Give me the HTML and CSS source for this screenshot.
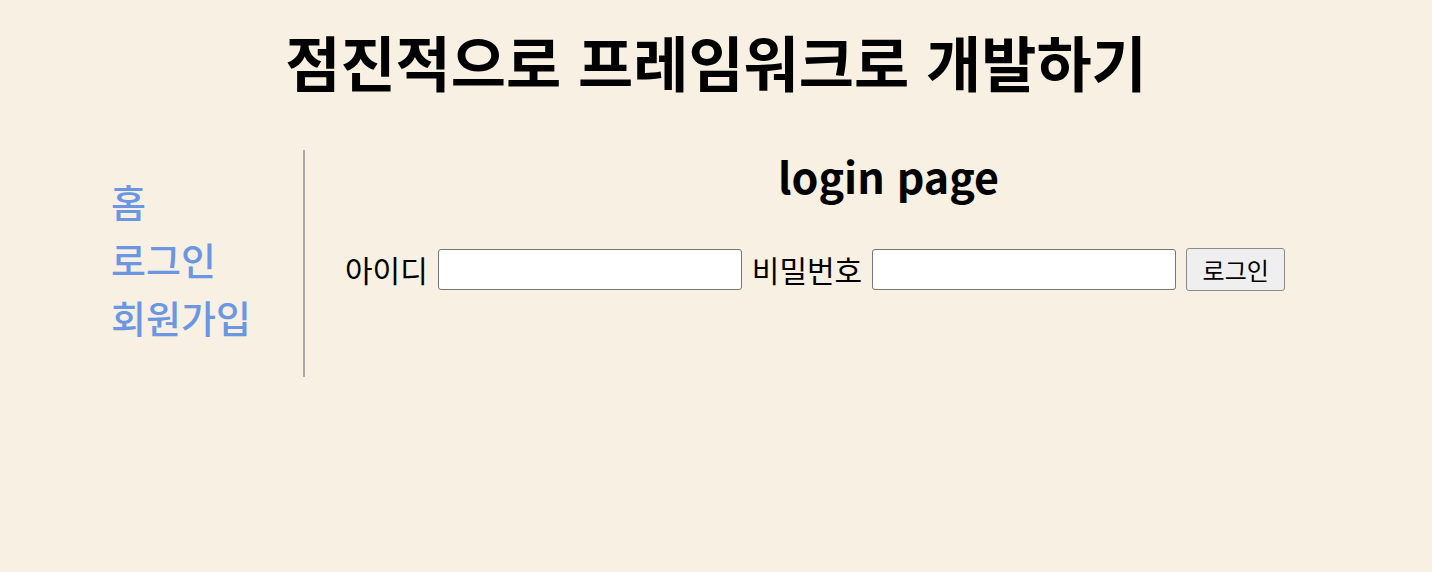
FILE: index.html
```html
<!DOCTYPE html>
<html lang="ko">
<head>
    <meta charset="UTF-8">
    <meta name="viewport" content="width=device-width, initial-scale=1.0">
    <title>login page</title>
    <link rel="stylesheet" href="styles.css">
</head>
<body>
    <h1 class="title">점진적으로 프레임워크로 개발하기</h1>
    <div class="container">
        <nav class="side-nav">
            <a href="#">홈</a>
            <a href="#">로그인</a>
            <a href="#">회원가입</a>
        </nav>
        <main class="content">
            <h2>login page</h2>
            <form class="login-form" onsubmit="return false">
                <label for="user_id">아이디</label>
                <input type="text" id="user_id" name="user_id">
                <label for="user_pw">비밀번호</label>
                <input type="password" id="user_pw" name="user_pw">
                <button type="submit">로그인</button>
            </form>
        </main>
    </div>
</body>
</html>
```

FILE: styles.css
```css
* { box-sizing: border-box; margin: 0; padding: 0; }
body {
    font-family: "Noto Sans CJK KR", "Noto Sans", sans-serif; background-color: #f8f0e2; color: #000000;
}
.title {
    font-size: 60px; line-height: 76px; text-align: center; margin-top: 23px; font-weight: 700;
}
.container { display: flex; margin-top: 51px; }
.side-nav {
    width: 305px; border-right: 2px solid #a9a9a9; padding: 22px 0 31px 111px;
    display: flex; flex-direction: column;
}
.side-nav a {
    color: #6b96e4; text-decoration: none; font-size: 38px; line-height: 58px; font-weight: 500;
}
.content { flex: 1; padding-left: 40px; }
.content h2 { font-size: 43px; line-height: 50px; text-align: center; font-weight: 700; }
.login-form { display: flex; align-items: center; gap: 10px; margin-top: 47px; }
.login-form label { font-size: 30px; }
.login-form input {
    width: 304px; height: 41px; border: 1px solid #767676; border-radius: 3px; background: #ffffff;
    font-size: 18px; padding: 0 6px;
}
.login-form button {
    width: 99px; height: 43px; font-size: 24px; font-family: inherit; border: 1px solid #8a8a8a;
    border-radius: 3px; background-color: #efefef; color: #000000;
}
```
